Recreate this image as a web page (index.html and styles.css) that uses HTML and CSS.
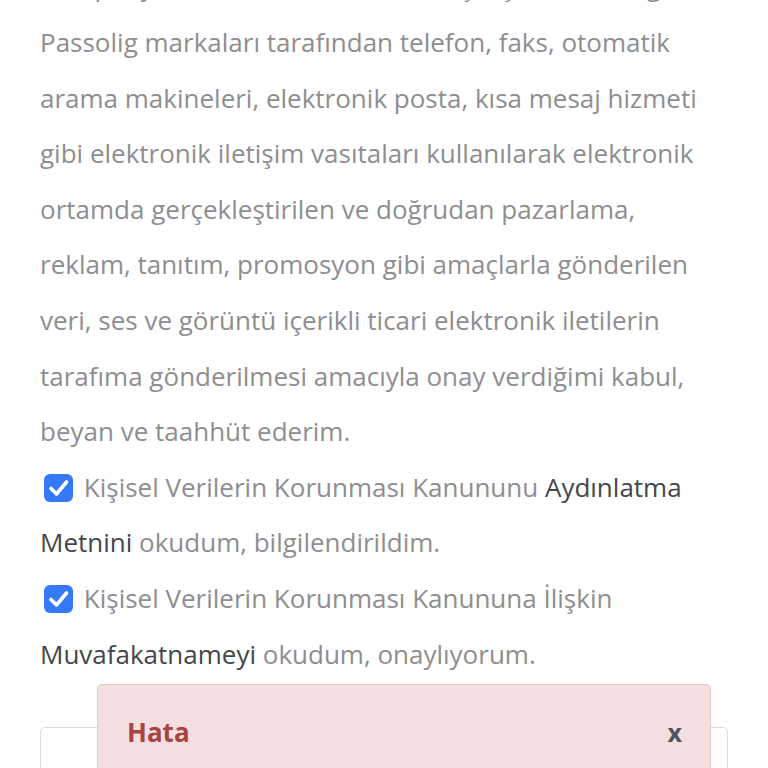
FILE: index.html
```html
<!DOCTYPE html>
<html lang="tr">
<head>
    <meta charset="UTF-8">
    <title>Onay</title>
    <link rel="stylesheet" href="styles.css">
</head>
<body>
<div class="form-wrap">
    <p class="consent-text">Kampanyalardan haberdar olmak için şirketi ve bağlı
        Passolig markaları tarafından telefon, faks, otomatik arama makineleri, elektronik posta, kısa mesaj hizmeti gibi elektronik iletişim vasıtaları kullanılarak elektronik ortamda gerçekleştirilen ve doğrudan pazarlama, reklam, tanıtım, promosyon gibi amaçlarla gönderilen veri, ses ve görüntü içerikli ticari elektronik iletilerin tarafıma gönderilmesi amacıyla onay verdiğimi kabul, beyan ve taahhüt ederim.</p>

    <label class="check-row">
        <span class="checkbox">
            <svg width="29" height="28" viewBox="0 0 29 28"><rect x="0" y="0" width="29" height="28" rx="6" fill="#3479f5"/><path d="M7 14.5 L12.5 20 L22.5 8" fill="none" stroke="#fff" stroke-width="3.6" stroke-linecap="round" stroke-linejoin="round"/></svg>
        </span>
        Kişisel Verilerin Korunması Kanununu <a class="doc-link">Aydınlatma Metnini</a> okudum, bilgilendirildim.
    </label>

    <label class="check-row">
        <span class="checkbox">
            <svg width="29" height="28" viewBox="0 0 29 28"><rect x="0" y="0" width="29" height="28" rx="6" fill="#3479f5"/><path d="M7 14.5 L12.5 20 L22.5 8" fill="none" stroke="#fff" stroke-width="3.6" stroke-linecap="round" stroke-linejoin="round"/></svg>
        </span>
        Kişisel Verilerin Korunması Kanununa İlişkin <a class="doc-link">Muvafakatnameyi</a> okudum, onaylıyorum.
    </label>

    <div class="input-box"></div>
</div>

<div class="alert alert-danger">
    <div class="alert-head">
        <span class="alert-title">Hata</span>
        <span class="alert-close">x</span>
    </div>
</div>
</body>
</html>
```

FILE: styles.css
```css
*{
    margin: 0;
    padding: 0;
    box-sizing: border-box;
}
html, body{
    background: #fff;
    overflow: hidden;
}
body{
    font-family: "Open Sans", "Noto Sans", sans-serif;
    font-size: 26px;
    line-height: 55.6px;
    color: #8e8e91;
}
.form-wrap{
    padding: 0 40px;
    margin-top: -40.6px;
}
.consent-text{
    margin: 0;
}
.check-row{
    display: block;
}
.checkbox{
    display: inline-block;
    width: 29px;
    height: 28px;
    margin-left: 4px;
    margin-right: 4px;
    vertical-align: -5px;
}
.checkbox svg{
    display: block;
}
.doc-link{
    color: #44464b;
    text-decoration: none;
}
.input-box{
    margin-top: 45px;
    height: 80px;
    border: 1px solid #dcdcdc;
    border-radius: 5px;
    background: #fff;
}
.alert{
    position: absolute;
    left: 97px;
    top: 684px;
    width: 614px;
    height: 120px;
    background-color: #f4dfe0;
    border: 1px solid #e9c8cb;
    border-radius: 5px;
    padding: 30px 28px 0 29px;
}
.alert-head{
    display: flex;
    justify-content: space-between;
    align-items: center;
    line-height: 34px;
}
.alert-title{
    font-weight: 700;
    font-size: 26px;
    color: #a94442;
}
.alert-close{
    font-weight: 700;
    font-size: 25px;
    color: #50555b;
}
```
